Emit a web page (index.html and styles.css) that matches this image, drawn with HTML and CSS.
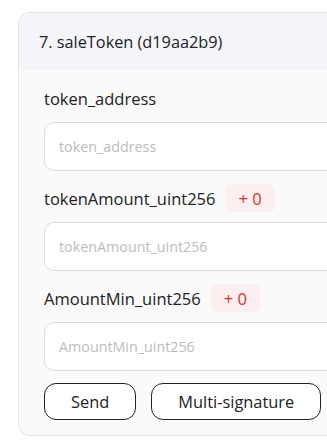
FILE: index.html
```html
<!DOCTYPE html>
<html lang="en">
<head>
    <meta charset="UTF-8">
    <meta name="viewport" content="width=device-width, initial-scale=1.0">
    <title>saleToken</title>
    <link rel="stylesheet" href="styles.css">
</head>
<body>
    <div class="card">
        <div class="card-header">7. saleToken (d19aa2b9)</div>

        <div class="card-body">
            <div class="field">
                <div class="field-label">
                    <span>token_address</span>
                </div>
                <input type="text" class="field-input" placeholder="token_address">
            </div>

            <div class="field">
                <div class="field-label">
                    <span>tokenAmount_uint256</span>
                    <span class="badge">+ 0</span>
                </div>
                <input type="text" class="field-input" placeholder="tokenAmount_uint256">
            </div>

            <div class="field">
                <div class="field-label">
                    <span>AmountMin_uint256</span>
                    <span class="badge">+ 0</span>
                </div>
                <input type="text" class="field-input" placeholder="AmountMin_uint256">
            </div>

            <div class="actions">
                <button class="btn">Send</button>
                <button class="btn">Multi-signature</button>
            </div>
        </div>
    </div>
</body>
</html>
```

FILE: styles.css
```css
body {
    font-family: 'Open Sans', 'Lato', sans-serif;
    background-color: #ffffff;
    margin: 0;
    padding: 12px 0 0 18px;
    color: #222;
    overflow: hidden;
}

.card {
    width: 380px;
    border: 1px solid #e4e4e7;
    border-radius: 12px;
    background: #fafafa;
    overflow: hidden;
}

.card-header {
    height: 57px;
    display: flex;
    align-items: center;
    padding-left: 20px;
    background-color: #f4f5f9;
    font-size: 16.3px;
    color: #222;
}

.card-body {
    padding: 14px 0 15px 25px;
}

.field {
    margin-bottom: 13px;
}

.field-label {
    display: flex;
    align-items: center;
    gap: 10px;
    height: 28px;
    margin-bottom: 10px;
    font-size: 16.5px;
    color: #222;
}

.badge {
    display: inline-flex;
    align-items: center;
    height: 28px;
    padding: 0 13px;
    border-radius: 6px;
    background-color: #fcefef;
    color: #d6332f;
}

.field-input {
    display: block;
    box-sizing: border-box;
    width: 100%;
    height: 49px;
    padding: 0 14px;
    border: 1px solid #dcdcdc;
    border-radius: 10px;
    background: #ffffff;
    font-family: inherit;
    font-size: 14.3px;
    outline: none;
}

.field-input::placeholder {
    color: #bdbdbd;
}

.actions {
    display: flex;
    gap: 15px;
    margin-top: -1px;
}

.btn {
    height: 37px;
    padding: 0 26px;
    border: 1px solid #222;
    border-radius: 12px;
    background: #ffffff;
    font-family: inherit;
    font-size: 16.4px;
    color: #222;
    cursor: pointer;
}
```
